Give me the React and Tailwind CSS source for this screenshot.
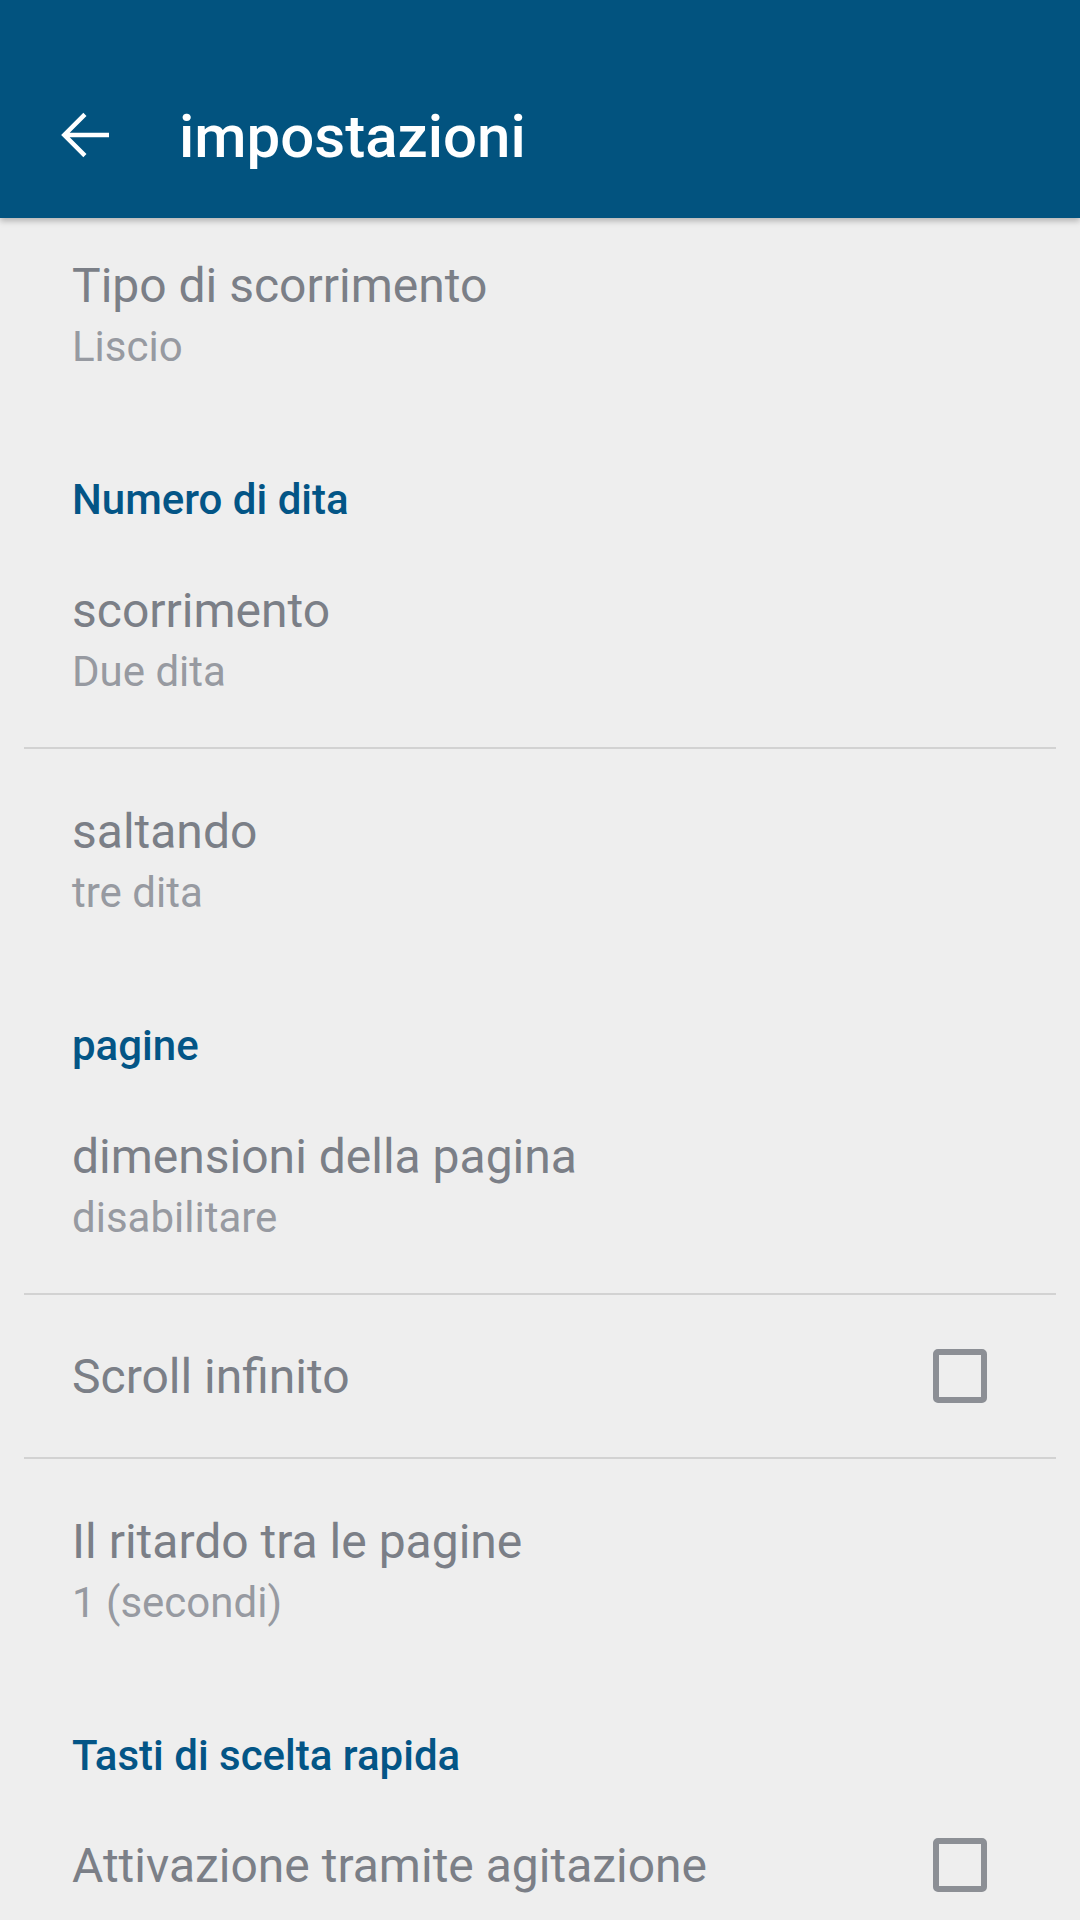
import React from "react";

const font = { fontFamily: "Roboto, 'Noto Sans', sans-serif" };

function TwoLine({ title, summary, first }) {
  return (
    <div className={first ? "pt-[40px] pb-[50px] pl-[72px] pr-[72px]" : "pt-[55px] pb-[50px] pl-[72px] pr-[72px]"}>
      <div className="text-[48px] leading-[56px] text-[#7b7f87] whitespace-nowrap">{title}</div>
      <div className="mt-[8px] text-[42px] leading-[50px] text-[#979aa1] whitespace-nowrap">{summary}</div>
    </div>
  );
}

function Category({ label }) {
  return (
    <div className="pt-[53px] pb-[3px] pl-[72px]">
      <div className="text-[42px] leading-[50px] font-medium text-[#035586] whitespace-nowrap">{label}</div>
    </div>
  );
}

function CheckRow({ title }) {
  return (
    <div className="h-[162px] flex items-center pl-[72px] pr-[93px]">
      <div className="flex-1 text-[48px] leading-[56px] text-[#7b7f87] whitespace-nowrap mt-[1px]">{title}</div>
      <div className="w-[54px] h-[54px] rounded-[5px] border-[6px] border-[#8c8f95]" />
    </div>
  );
}

function Divider() {
  return <div className="mx-[24px] h-[2px] bg-[#d2d2d2]" />;
}

export default function App() {
  return (
    <div className="w-[1080px] h-[1920px] overflow-hidden bg-[#eeeeee] flex flex-col" style={font}>
      <div className="relative z-10 h-[218px] shrink-0 bg-[#02537f] flex items-start shadow-[0_3px_6px_rgba(0,0,0,0.25)]">
        <svg className="ml-[49px] mt-[99px]" width="72" height="72" viewBox="0 0 24 24" fill="#ffffff">
          <path d="M20 11.25H6.9l5.6-5.6L11.45 4.6 4.05 12l7.4 7.4 1.05-1.05-5.6-5.6H20z" />
        </svg>
        <div className="ml-[58px] mt-[102px] text-[60px] leading-[70px] font-medium text-white whitespace-nowrap">impostazioni</div>
      </div>
      <div className="flex flex-col">
        <TwoLine title="Tipo di scorrimento" summary="Liscio" first />
        <Category label="Numero di dita" />
        <TwoLine title="scorrimento" summary="Due dita" />
        <Divider />
        <TwoLine title="saltando" summary="tre dita" />
        <Category label="pagine" />
        <TwoLine title="dimensioni della pagina" summary="disabilitare" />
        <Divider />
        <CheckRow title="Scroll infinito" />
        <Divider />
        <TwoLine title="Il ritardo tra le pagine" summary="1 (secondi)" />
        <Category label="Tasti di scelta rapida" />
        <CheckRow title="Attivazione tramite agitazione" />
      </div>
    </div>
  );
}
